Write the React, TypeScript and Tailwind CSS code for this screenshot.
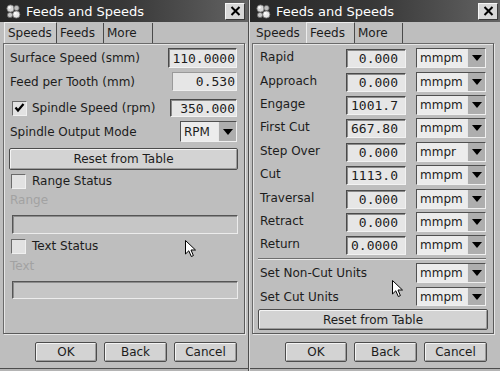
import React from "react";

function BallsIcon() {
  return (
    <svg width="15" height="15" viewBox="0 0 15 15">
      <circle cx="4.5" cy="4.5" r="3.6" fill="#d8d8d8" stroke="#777" strokeWidth="0.8" />
      <circle cx="10.5" cy="4" r="2.6" fill="#bdbdbd" stroke="#666" strokeWidth="0.8" />
      <circle cx="4" cy="11" r="2.6" fill="#c8c8c8" stroke="#666" strokeWidth="0.8" />
      <circle cx="10.3" cy="10.5" r="3.6" fill="#e8e8e8" stroke="#777" strokeWidth="0.8" />
      <circle cx="3.5" cy="3.5" r="1.2" fill="#fff" />
      <circle cx="9.3" cy="9.4" r="1.2" fill="#fff" />
    </svg>
  );
}

function TitleBar({ right }: { right: string }) {
  return (
    <div className={`h-[22px] shrink-0 flex items-center bg-linear-to-r from-[#272727] via-[#383838] to-[#646464] pl-[6px] ${right}`}>
      <BallsIcon />
      <span className="ml-[5px] text-[13px] leading-none text-white">Feeds and Speeds</span>
      <div className="ml-auto w-[20px] h-[17px] bg-[#d8d8d8] border border-t-[#f6f6f6] border-l-[#f6f6f6] border-r-[#3a3a3a] border-b-[#3a3a3a] flex items-center justify-center">
        <svg width="11" height="10" viewBox="0 0 11 10">
          <path d="M1.5 1 L9.5 9 M9.5 1 L1.5 9" stroke="#000" strokeWidth="2" />
        </svg>
      </div>
    </div>
  );
}

function Tab({ label, w, active, noRight }: { label: string; w: string; active?: boolean; noRight?: boolean }) {
  return (
    <div
      className={`${w} h-[20px] flex items-center pl-[3px] text-[12px] leading-none ${
        active ? "bg-[#c6c6c6] border-t border-l border-t-[#ececec] border-l-[#ececec] border-r border-r-[#4a4a4a] h-[21px]" : noRight ? "" : "border-r border-r-[#4a4a4a]"
      }`}
    >
      {label}
    </div>
  );
}

function Field({ value, light }: { value: string; light?: boolean }) {
  return (
    <div
      className={`h-full bg-[#e6e6e6] border flex items-center justify-end pr-[1px] font-['DejaVu_Sans_Mono',monospace] text-[13px] leading-none ${
        light
          ? "border-t-[#9a9a9a] border-l-[#9a9a9a] border-r-[#f0f0f0] border-b-[#f0f0f0]"
          : "border-t-[#4a4a4a] border-l-[#4a4a4a] border-r-[#f2f2f2] border-b-[#f2f2f2] shadow-[inset_1px_1px_0_#8a8a8a]"
      }`}
    >
      {value}
    </div>
  );
}

function Select({ value }: { value: string }) {
  return (
    <div className="h-full w-full flex bg-[#ececec] border border-t-[#505050] border-l-[#505050] border-r-[#f0f0f0] border-b-[#f0f0f0]">
      <span className="flex-1 flex items-center pl-[3px] text-[12px] leading-none">{value}</span>
      <div className="w-[18px] bg-[#aeaeae] border-l border-[#e8e8e8] flex items-center justify-center">
        <svg width="10" height="6" viewBox="0 0 10 6">
          <path d="M0 0 L10 0 L5 6 Z" fill="#000" />
        </svg>
      </div>
    </div>
  );
}

function Checkbox({ checked }: { checked?: boolean }) {
  return (
    <div className="w-[15px] h-[15px] bg-[#e2e2e2] border border-t-[#6a6a6a] border-l-[#6a6a6a] border-r-[#f0f0f0] border-b-[#f0f0f0] flex items-start justify-start">
      {checked && (
        <svg width="11" height="10" viewBox="0 0 11 10" className="mt-[1px] ml-[1px]">
          <path d="M1.5 4.5 L4 7.5 L9.5 1" stroke="#000" strokeWidth="2.2" fill="none" />
        </svg>
      )}
    </div>
  );
}

function Button({ label, w }: { label: string; w: string }) {
  return (
    <div
      className={`${w} h-[20px] bg-[#d3d3d3] border border-[#4c4c4c] rounded-[2px] shadow-[inset_1px_1px_0_#f4f4f4,inset_-1px_-1px_0_#9c9c9c] flex items-center justify-center text-[12px] leading-none`}
    >
      {label}
    </div>
  );
}

function ButtonsBar({ pr }: { pr: string }) {
  return (
    <div className={`h-[34px] shrink-0 flex items-start justify-end pt-[8px] gap-[7px] ${pr}`}>
      <Button label="OK" w="w-[62px]" />
      <Button label="Back" w="w-[63px]" />
      <Button label="Cancel" w="w-[63px]" />
    </div>
  );
}

function Cursor({ className }: { className: string }) {
  return (
    <svg width="12" height="18" viewBox="0 0 12 18" className={className}>
      <path d="M0.5 0.5 L0.5 14 L3.8 10.8 L6.3 16.5 L8.4 15.6 L6 10 L10.5 10 Z" fill="#fff" stroke="#000" strokeWidth="1" />
    </svg>
  );
}

const panelCls =
  "h-[291px] shrink-0 border border-t-[#6a6a6a] border-l-[#6a6a6a] border-r-[#5a5a5a] border-b-[#5a5a5a] shadow-[inset_1px_1px_0_#e6e6e6,1px_1px_0_#e6e6e6] flex flex-col";

const feedRows: { label: string; value: string; unit: string; mt: string }[] = [
  { label: "Rapid", value: "0.000", unit: "mmpm", mt: "mt-[4px]" },
  { label: "Approach", value: "0.000", unit: "mmpm", mt: "mt-[4px]" },
  { label: "Engage", value: "1001.7", unit: "mmpm", mt: "mt-[3px]" },
  { label: "First Cut", value: "667.80", unit: "mmpm", mt: "mt-[3px]" },
  { label: "Step Over", value: "0.000", unit: "mmpr", mt: "mt-[4px]" },
  { label: "Cut", value: "1113.0", unit: "mmpm", mt: "mt-[3px]" },
  { label: "Traversal", value: "0.000", unit: "mmpm", mt: "mt-[4px]" },
  { label: "Retract", value: "0.000", unit: "mmpm", mt: "mt-[3px]" },
  { label: "Return", value: "0.0000", unit: "mmpm", mt: "mt-[3px]" },
];

export default function App() {
  return (
    <div className="relative w-[500px] h-[371px] flex bg-[#bebebe] font-['DejaVu_Sans',sans-serif] text-[#1c1c1c] overflow-hidden">
      {/* Left dialog */}
      <div className="w-[249px] h-full flex flex-col border-r border-[#4d4d4d]">
        <TitleBar right="pr-[3px]" />
        <div className="h-[21px] shrink-0 flex items-end pl-[4px]">
          <Tab label="Speeds" w="w-[53px]" active />
          <Tab label="Feeds" w="w-[47px]" />
          <Tab label="More" w="w-[49px]" />
        </div>
        <div className={`${panelCls} ml-[3px] mr-[3px] pl-[6px] pr-[7px]`}>
          <div className="mt-[4px] h-[20px] flex items-center">
            <span className="text-[12px] leading-none">Surface Speed (smm)</span>
            <div className="ml-auto w-[69px] h-full">
              <Field value="110.0000" />
            </div>
          </div>
          <div className="mt-[4px] h-[19px] flex items-center">
            <span className="text-[12px] leading-none">Feed per Tooth (mm)</span>
            <div className="ml-auto w-[65px] h-full">
              <Field value="0.530" light />
            </div>
          </div>
          <div className="mt-[8px] h-[18px] flex items-center">
            <div className="ml-[2px]">
              <Checkbox checked />
            </div>
            <span className="ml-[5px] text-[12px] leading-none">Spindle Speed (rpm)</span>
            <div className="ml-auto w-[67px] h-full">
              <Field value="350.000" />
            </div>
          </div>
          <div className="mt-[4px] h-[21px] flex items-center">
            <span className="text-[12px] leading-none">Spindle Output Mode</span>
            <div className="ml-auto w-[57px] h-full">
              <Select value="RPM" />
            </div>
          </div>
          <div className="mt-[6px] h-[22px] ml-[-1px] w-[229px]">
            <div className="h-full bg-[#d3d3d3] border border-[#4c4c4c] rounded-[2px] shadow-[inset_1px_1px_0_#f4f4f4,inset_-1px_-1px_0_#9c9c9c] flex items-center justify-center text-[12px] leading-none">
              Reset from Table
            </div>
          </div>
          <div className="mt-[3px] h-[16px] flex items-center">
            <div className="ml-[1px]">
              <Checkbox />
            </div>
            <span className="ml-[6px] text-[12px] leading-none">Range Status</span>
          </div>
          <div className="mt-[4px] h-[14px] flex items-center">
            <span className="text-[12px] leading-none text-[#a2a2a2]">Range</span>
          </div>
          <div className="mt-[8px] h-[19px] ml-[2px] mr-[-1px] bg-[#c6c6c6] border border-t-[#555] border-l-[#555] border-r-[#ececec] border-b-[#ececec] shadow-[inset_1px_1px_0_#8c8c8c]" />
          <div className="mt-[4px] h-[16px] flex items-center">
            <div className="ml-[1px]">
              <Checkbox />
            </div>
            <span className="ml-[6px] text-[12px] leading-none">Text Status</span>
          </div>
          <div className="mt-[5px] h-[14px] flex items-center">
            <span className="text-[12px] leading-none text-[#a2a2a2]">Text</span>
          </div>
          <div className="mt-[8px] h-[18px] ml-[2px] mr-[-1px] bg-[#c6c6c6] border border-t-[#555] border-l-[#555] border-r-[#ececec] border-b-[#ececec] shadow-[inset_1px_1px_0_#8c8c8c]" />
        </div>
        <ButtonsBar pr="pr-[11px]" />
        <div className="h-[3px] border-t border-[#4d4d4d] bg-[#b4b4b4]" />
      </div>

      {/* Right dialog */}
      <div className="w-[251px] h-full flex flex-col border-l border-[#dcdcdc]">
        <TitleBar right="pr-[2px]" />
        <div className="h-[21px] shrink-0 flex items-end pl-[3px]">
          <Tab label="Speeds" w="w-[53px]" noRight />
          <Tab label="Feeds" w="w-[49px]" active />
          <Tab label="More" w="w-[48px]" />
        </div>
        <div className={`${panelCls} ml-[2px] mr-[6px] pl-[7px] pr-[7px]`}>
          {feedRows.map((r) => (
            <div key={r.label} className={`${r.mt} h-[20px] flex items-center`}>
              <span className="w-[86px] text-[12px] leading-none -mt-[3px]">{r.label}</span>
              <div className="w-[60px] h-[19px] pr-[0px]">
                <div className="h-full [&>div]:pr-[7px]">
                  <Field value={r.value} />
                </div>
              </div>
              <div className="ml-auto w-[70px] h-full">
                <Select value={r.unit} />
              </div>
            </div>
          ))}
          <div className="mt-[3px] h-[2px] ml-[-2px] mr-[0px] border-t border-[#6e6e6e] border-b border-b-[#ececec]" />
          <div className="mt-[3px] h-[20px] flex items-center">
            <span className="text-[12px] leading-none">Set Non-Cut Units</span>
            <div className="ml-auto w-[70px] h-full">
              <Select value="mmpm" />
            </div>
          </div>
          <div className="mt-[4px] h-[19px] flex items-center">
            <span className="text-[12px] leading-none">Set Cut Units</span>
            <div className="ml-auto w-[70px] h-full">
              <Select value="mmpm" />
            </div>
          </div>
          <div className="mt-[3px] h-[21px] ml-[-2px] w-[230px]">
            <div className="h-full bg-[#d3d3d3] border border-[#4c4c4c] rounded-[2px] shadow-[inset_1px_1px_0_#f4f4f4,inset_-1px_-1px_0_#9c9c9c] flex items-center justify-center text-[12px] leading-none">
              Reset from Table
            </div>
          </div>
        </div>
        <ButtonsBar pr="pr-[13px]" />
        <div className="h-[3px] border-t border-[#4d4d4d] bg-[#b4b4b4]" />
      </div>

      <Cursor className="absolute left-[185px] top-[240px]" />
      <Cursor className="absolute left-[392px] top-[280px]" />
    </div>
  );
}
